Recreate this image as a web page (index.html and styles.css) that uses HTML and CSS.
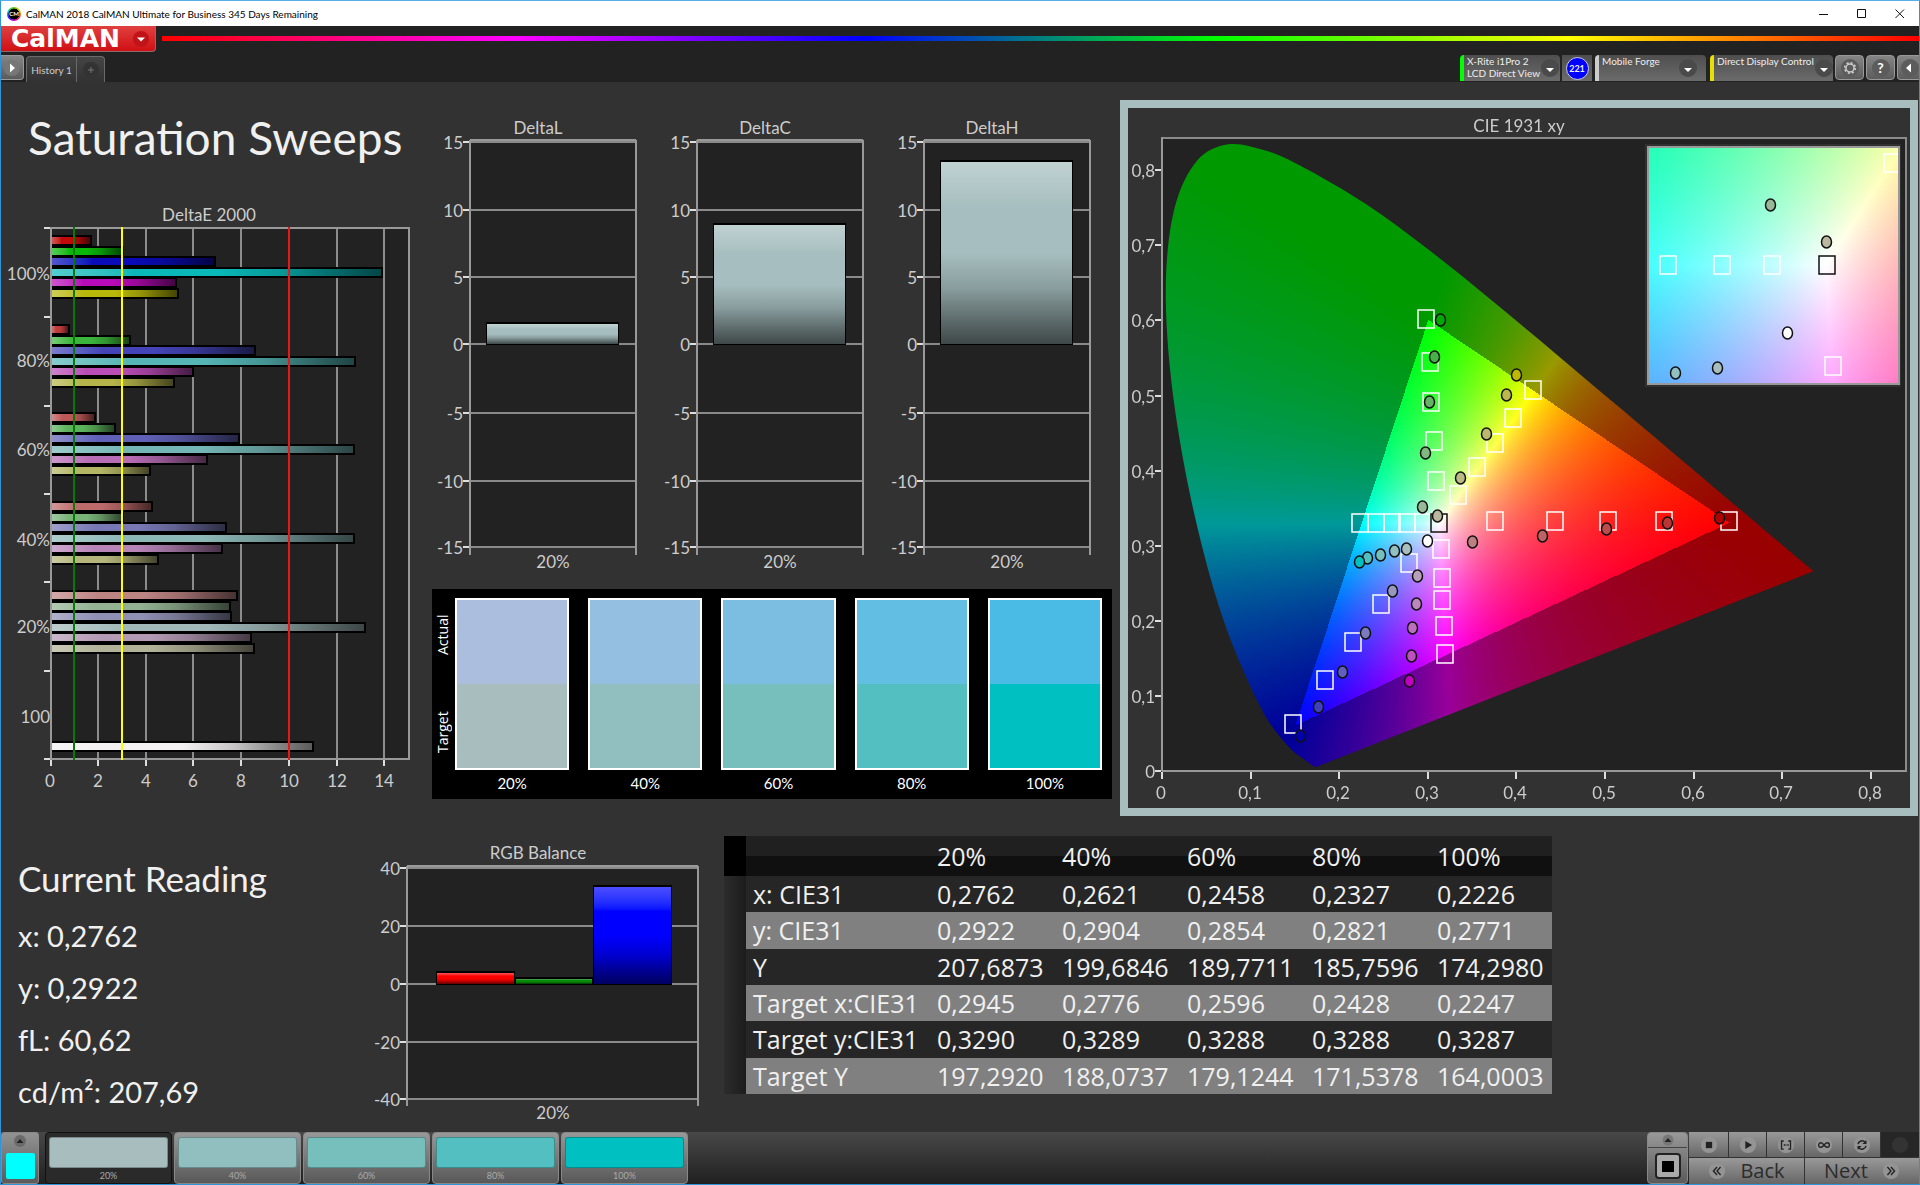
FILE: index.html
```html
<!DOCTYPE html>
<html lang="en">
<head>
<meta charset="utf-8">
<meta name="viewport" content="width=device-width, initial-scale=1">
<title>CalMAN 2018 CalMAN Ultimate for Business 345 Days Remaining</title>
<link rel="stylesheet" href="styles.css">
</head>
<body>
<div class="window">
  <header class="titlebar">
    <span class="app-icon">CM</span>
    <span class="app-title">CalMAN 2018 CalMAN Ultimate for Business 345 Days Remaining</span>
    <div class="window-buttons">
      <button type="button" aria-label="Minimize"><svg width="10" height="10" viewBox="0 0 10 10"><path d="M0 5.5h9" stroke="#111" fill="none"/></svg></button>
      <button type="button" aria-label="Maximize"><svg width="10" height="10" viewBox="0 0 10 10"><path d="M.5 .5h8v8h-8z" stroke="#111" fill="none"/></svg></button>
      <button type="button" aria-label="Close"><svg width="10" height="10" viewBox="0 0 10 10"><path d="M.5 .5l8.500 8.500M9 .5L.5 9" stroke="#111" fill="none"/></svg></button>
    </div>
  </header>

  <div class="brandbar">
    <button type="button" class="brand"><span>CalMAN</span>
      <svg width="18" height="18" viewBox="0 0 18 18"><circle cx="9" cy="9" r="8" fill="#c01418"/><path d="M5 7.500h8l-4 4z" fill="#fff"/></svg>
    </button>
    <div class="spectrum"></div>
  </div>

  <nav class="tabbar">
    <button type="button" class="tool-button tool-play" aria-label="Expand"><svg width="20" height="20" viewBox="0 0 20 20"><circle cx="10" cy="10" r="8" fill="#777"/><path d="M8 5.500l5 4.500-5 4.500z" fill="#fff"/></svg></button>
    <div class="tabs">
      <button type="button" class="tab">History 1</button>
      <button type="button" class="tab tab-add" aria-label="Add tab"><svg width="18" height="18" viewBox="0 0 18 18"><circle cx="9" cy="9" r="8" fill="#333"/><path d="M9 6v6M6 9h6" stroke="#777"/></svg></button>
    </div>
    <div class="devices">
      <button type="button" class="device device-meter"><span class="device-name">X-Rite i1Pro 2<br>LCD Direct View</span>
        <svg width="20" height="20" viewBox="0 0 20 20"><circle cx="10" cy="10" r="9" fill="#4a4a4a"/><path d="M6 10h8l-4 4z" fill="#fff"/></svg></button>
      <span class="device-count"><b>221</b></span>
      <button type="button" class="device device-source"><span class="device-name">Mobile Forge</span>
        <svg width="20" height="20" viewBox="0 0 20 20"><circle cx="10" cy="10" r="9" fill="#4a4a4a"/><path d="M6 10h8l-4 4z" fill="#fff"/></svg></button>
      <button type="button" class="device device-display"><span class="device-name">Direct Display Control</span>
        <svg width="20" height="20" viewBox="0 0 20 20"><circle cx="10" cy="10" r="9" fill="#4a4a4a"/><path d="M6 10h8l-4 4z" fill="#fff"/></svg></button>
      <button type="button" class="tool-button" aria-label="Settings"><svg width="20" height="20" viewBox="0 0 20 20"><circle cx="10" cy="10" r="9" fill="#5c5c5c"/><circle cx="10" cy="10" r="4" fill="none" stroke="#ccc" stroke-width="1.500"/><circle cx="10" cy="10" r="5.300" fill="none" stroke="#ccc" stroke-width="1.600" stroke-dasharray="2.080 2.080"/></svg></button>
      <button type="button" class="tool-button tool-help" aria-label="Help"><span>?</span></button>
      <button type="button" class="tool-button tool-collapse" aria-label="Collapse"><svg width="20" height="20" viewBox="0 0 20 20"><circle cx="11" cy="10" r="9" fill="#5c5c5c"/><path d="M12 5.500l-5 4.500 5 4.500z" fill="#fff"/></svg></button>
    </div>
  </nav>

  <main class="workspace">
    <section class="overview">
      <div class="sweeps">
        <h1>Saturation Sweeps</h1>
        <svg id="delta-e" class="chart" viewBox="1 200 429 610"></svg>
      </div>
      <div class="deltas">
        <div class="delta-charts">
          <svg id="delta-l" class="chart" viewBox="430 110 227 470"></svg>
          <svg id="delta-c" class="chart" viewBox="430 110 227 470"></svg>
          <svg id="delta-h" class="chart" viewBox="430 110 227 470"></svg>
        </div>
        <div class="compare">
          <div class="compare-labels"><span>Target</span><span>Actual</span></div>
          <div class="pairs">
            <figure><div class="pair pair-20"></div><figcaption>20%</figcaption></figure>
            <figure><div class="pair pair-40"></div><figcaption>40%</figcaption></figure>
            <figure><div class="pair pair-60"></div><figcaption>60%</figcaption></figure>
            <figure><div class="pair pair-80"></div><figcaption>80%</figcaption></figure>
            <figure><div class="pair pair-100"></div><figcaption>100%</figcaption></figure>
          </div>
        </div>
      </div>
      <div class="cie">
        <canvas id="cie-fill" class="chart" width="782" height="700"></canvas>
        <svg id="cie" class="chart" viewBox="1128 108 782 700"></svg>
      </div>
    </section>

    <section class="details">
      <div class="reading">
        <h2>Current Reading</h2>
        <p>x: 0,2762</p>
        <p>y: 0,2922</p>
        <p>fL: 60,62</p>
        <p>cd/m²: 207,69</p>
      </div>
      <div class="balance"><svg id="rgb" class="chart" viewBox="370 836 340 286"></svg></div>
      <div class="readings">
        <table class="data">
          <thead><tr><td></td><th></th><th>20%</th><th>40%</th><th>60%</th><th>80%</th><th>100%</th></tr></thead>
          <tbody>
            <tr><td></td><th>x: CIE31</th><td>0,2762</td><td>0,2621</td><td>0,2458</td><td>0,2327</td><td>0,2226</td></tr>
            <tr><td></td><th>y: CIE31</th><td>0,2922</td><td>0,2904</td><td>0,2854</td><td>0,2821</td><td>0,2771</td></tr>
            <tr><td></td><th>Y</th><td>207,6873</td><td>199,6846</td><td>189,7711</td><td>185,7596</td><td>174,2980</td></tr>
            <tr><td></td><th>Target x:CIE31</th><td>0,2945</td><td>0,2776</td><td>0,2596</td><td>0,2428</td><td>0,2247</td></tr>
            <tr><td></td><th>Target y:CIE31</th><td>0,3290</td><td>0,3289</td><td>0,3288</td><td>0,3288</td><td>0,3287</td></tr>
            <tr><td></td><th>Target Y</th><td>197,2920</td><td>188,0737</td><td>179,1244</td><td>171,5378</td><td>164,0003</td></tr>
          </tbody>
        </table>
      </div>
    </section>
  </main>

  <footer class="toolbar">
    <button type="button" class="current-color" aria-label="Current color">
      <svg width="14" height="14" viewBox="0 0 14 14"><circle cx="7" cy="7" r="6" fill="#6a6a6a"/><path d="M3.500 9L7 5l3.500 4z" fill="#222"/></svg>
      <span></span>
    </button>
    <div class="levels">
      <button type="button" class="level level-20 selected"><span></span>20%</button>
      <button type="button" class="level level-40"><span></span>40%</button>
      <button type="button" class="level level-60"><span></span>60%</button>
      <button type="button" class="level level-80"><span></span>80%</button>
      <button type="button" class="level level-100"><span></span>100%</button>
    </div>
    <div class="transport">
      <div class="pattern">
        <button type="button" aria-label="Show patterns"><svg width="14" height="12" viewBox="0 0 14 12"><circle cx="7" cy="6" r="5.500" fill="#777"/><path d="M3.500 8L7 4l3.500 4z" fill="#222"/></svg></button>
        <button type="button" class="pattern-window" aria-label="Pattern window"><svg width="26" height="26" viewBox="0 0 26 26"><rect x="1" y="1" width="24" height="24" rx="3" fill="#aaa" stroke="#222" stroke-width="2"/><rect x="7" y="8" width="12" height="11" fill="#000"/></svg></button>
      </div>
      <div class="keys">
        <button type="button" aria-label="Stop"><svg viewBox="0 0 20 20"><circle cx="10" cy="10" r="9"/><path d="M6.500 6.500h7v7h-7z" fill="#222"/></svg></button>
        <button type="button" aria-label="Play"><svg viewBox="0 0 20 20"><circle cx="10" cy="10" r="9"/><path d="M7 5.500l7.500 4.500L7 14.500z" fill="#222"/></svg></button>
        <button type="button" aria-label="Read series"><svg viewBox="0 0 20 20"><circle cx="10" cy="10" r="9"/><path d="M7.500 5.500h-2.500v9h2.500M12.500 5.500h2.500v9h-2.500M7.500 10h1.500M9.500 10h1M11.500 10h1.500" fill="none" stroke="#222" stroke-width="1.500"/></svg></button>
        <button type="button" aria-label="Read continuously"><svg viewBox="0 0 20 20"><circle cx="10" cy="10" r="9"/><path d="M10 10C8.500 8 7.500 7.500 6.500 7.500a2.500 2.500 0 0 0 0 5C7.500 12.500 8.500 12 10 10s2.500-2.500 3.500-2.500a2.500 2.500 0 0 1 0 5C12.500 12.500 11.500 12 10 10z" fill="none" stroke="#222" stroke-width="1.400"/></svg></button>
        <button type="button" aria-label="Refresh"><svg viewBox="0 0 20 20"><circle cx="10" cy="10" r="9"/><path d="M5.500 9a4.600 4.600 0 0 1 8-2M14.500 11a4.600 4.600 0 0 1-8 2" fill="none" stroke="#222" stroke-width="1.600"/><path d="M15 4.500v4.500h-4.500zM5 15.500V11h4.500z" fill="#222"/></svg></button>
        <button type="button" class="key-off" aria-label="Unused"><svg viewBox="0 0 20 20"><circle cx="10" cy="10" r="9"/></svg></button>
        <button type="button" class="step"><svg viewBox="0 0 20 20"><circle cx="10" cy="10" r="9"/><path d="M10 5.500L6 10l4 4.500M14 5.500L10 10l4 4.500" fill="none" stroke="#222" stroke-width="1.500"/></svg><span>Back</span></button>
        <button type="button" class="step"><span>Next</span><svg viewBox="0 0 20 20"><circle cx="10" cy="10" r="9"/><path d="M6 5.500l4 4.500-4 4.500M10 5.500l4 4.500-4 4.500" fill="none" stroke="#222" stroke-width="1.500"/></svg></button>
      </div>
    </div>
  </footer>
</div>
<script src="script.js"></script>
</body>
</html>
```
FILE: styles.css
```css
* { box-sizing: border-box; }
html, body { margin: 0; }
body {
  background: #323232;
  color: #f0f0f0;
  font-family: Lato, "Open Sans", sans-serif;
}
button {
  margin: 0;
  padding: 0;
  border: 0;
  background: none;
  color: inherit;
  font: inherit;
}
svg { display: block; flex: none; }

.window {
  display: flex;
  flex-direction: column;
  min-height: 100vh;
  border: 1px solid #2d95d8;
  border-top-color: #58aee8;
}

/* Title bar */
.titlebar {
  display: flex;
  align-items: center;
  height: 25px;
  padding-left: 6px;
  background: #fff;
  color: #000;
}
.app-icon {
  display: grid;
  place-items: center;
  width: 14px;
  height: 14px;
  border-radius: 50%;
  background: radial-gradient(#000 52%, transparent 58%), conic-gradient(#6c0, #cc0, #e33, #c0c, #22f, #0cc, #6c0);
  color: #fff;
  font-size: 6px;
  font-weight: 700;
}
.app-title { margin-left: 5px; font-size: 10px; line-height: 14px; }
.window-buttons { display: flex; margin-left: auto; }
.window-buttons button { display: grid; place-items: center; width: 38px; height: 24px; }

/* Brand strip */
.brandbar { display: flex; height: 28px; background: #222; align-items: flex-start; }
.brand {
  display: flex;
  align-items: center;
  justify-content: space-between;
  width: 155px;
  height: 26px;
  padding: 0 5px 0 10px;
  border: solid #8b6a6a;
  border-width: 0 1px 1px 0;
  border-radius: 0 0 4px 0;
  background: linear-gradient(#e04040, #d01014);
  color: #fff;
  font-family: "DejaVu Sans", sans-serif;
  font-size: 25px;
  font-weight: 700;
  line-height: 24px;
}
.spectrum {
  flex: 1;
  height: 5px;
  margin: 10px 0 0 6px;
  background: linear-gradient(90deg, #f00, #f0f 20%, #00f 40%, #0f0 60%, #ff0 80%, #f00);
}

/* Tabs and devices */
.tabbar { display: flex; height: 28px; background: #222; align-items: flex-end; }
.tool-button {
  display: grid;
  place-items: center;
  width: 29px;
  height: 25px;
  border: 1px solid #999;
  border-radius: 4px;
  background: linear-gradient(#858585, #5c5c5c);
}
.devices .tool-button { margin-bottom: 2px; align-self: flex-end; }
.tool-play { width: 23px; margin-top: 1px; border-left: 0; border-radius: 0 4px 4px 0; align-self: flex-start; }
.tabs { display: flex; margin-left: 2px; border: 1px solid #6a6a6a; border-bottom: 0; border-radius: 4px 4px 0 0; background: linear-gradient(#454545, #323232); }
.tab { width: 49px; height: 25px; color: #ccc; font-size: 10px; white-space: nowrap; }
.tab-add { display: grid; place-items: center; width: 28px; border-left: 1px solid #6a6a6a; }
.devices { display: flex; gap: 2px; margin-left: auto; color: #eee; }
.device {
  display: flex;
  justify-content: space-between;
  align-items: center;
  height: 26px;
  padding: 0 8px 0 3px;
  border-left: 4px solid #0f0;
  border-radius: 4px 4px 0 0;
  background: linear-gradient(#4e4e4e, #6b6b6b);
  font-size: 10px;
  line-height: 12px;
  text-align: left;
}
.device-name { align-self: flex-start; white-space: nowrap; }
.device-meter { width: 100px; }
.device-count { display: grid; place-items: center; width: 30px; height: 26px; background: linear-gradient(#4e4e4e, #6b6b6b); }
.device-count b { width: 23px; height: 23px; border: 1px solid #ccd; border-radius: 50%; background: #00f; font-size: 9px; line-height: 21px; text-align: center; }
.device-source { width: 111px; margin-left: 1px; border-left-color: #ccc; }
.device-display { width: 123px; margin-left: 2px; padding-right: 4px; border-left-color: #e8e000; }
.tool-help span { width: 18px; height: 18px; border-radius: 50%; background: #5c5c5c; color: #fff; font-size: 14px; font-weight: 700; line-height: 18px; }
.tool-collapse.tool-button { width: 22px; border-right: 0; border-radius: 4px 0 0 4px; }

/* Workspace */
.workspace { flex: 1; }
.chart { display: block; width: 100%; height: auto; }
.chart text { font-size: 17px; fill: #ccc; }
.overview {
  display: grid;
  grid-template-columns: 429fr 690fr 799fr;
  align-items: start;
}
.overview > * { min-width: 0; }
h1 {
  height: 118px;
  margin: 0;
  padding: 24px 0 0 27px;
  font-size: 46px;
  font-weight: 400;
  line-height: 64px;
  white-space: nowrap;
}
.deltas { padding-top: 28px; }
.delta-charts { display: grid; grid-template-columns: repeat(3, minmax(0, 1fr)); padding-right: 9px; }
.compare {
  display: flex;
  gap: 4px;
  margin: 9px 8px 0 2px;
  padding: 9px 10px 2px 3px;
  background: #000;
  color: #fff;
}
.compare-labels {
  display: flex;
  justify-content: space-between;
  align-items: center;
  width: 16px;
  height: 172px;
  padding: 17px 0;
  writing-mode: vertical-rl;
  transform: rotate(180deg);
  font-family: "Open Sans", sans-serif;
  font-size: 14px;
  line-height: 16px;
}
.pairs { display: grid; flex: 1; grid-template-columns: repeat(5, minmax(0, 1fr)); column-gap: 19px; }
figure { margin: 0; }
.pair { height: 172px; border: 2px solid #fff; }
.pair-20 { background: linear-gradient(#abbedd 50%, #a7bdbe 50%); }
.pair-40 { background: linear-gradient(#94bfe1 50%, #91bebe 50%); }
.pair-60 { background: linear-gradient(#7cbde2 50%, #76bfbd 50%); }
.pair-80 { background: linear-gradient(#63bee3 50%, #54bfc0 50%); }
.pair-100 { background: linear-gradient(#49bbe4 50%, #00c0c2 50%); }
figcaption { font-size: 15px; line-height: 27px; text-align: center; }
.cie {
  display: grid;
  margin: 18px 1px 3px 0;
  border: 8px solid #a8bebe;
}
.cie > * { grid-area: 1 / 1; }

/* Details */
.details {
  display: grid;
  grid-template-columns: 369fr 340fr 842fr 367fr;
  align-items: start;
  padding-top: 17px;
}
.details > * { min-width: 0; }
.reading { padding: 16px 0 0 17px; }
.reading h2 { margin: 0 0 6px; font-size: 35px; font-weight: 400; line-height: 52px; white-space: nowrap; }
.reading p { margin: 0; font-size: 29px; line-height: 52px; white-space: nowrap; }
.readings { padding-left: 14px; }
.data {
  width: 100%;
  height: 258px;
  border-collapse: collapse;
  table-layout: fixed;
  font-family: "Open Sans", sans-serif;
  font-size: 25px;
  line-height: 36px;
  white-space: nowrap;
}
.data th, .data td { padding: 0; font-weight: 400; text-align: left; }
.data thead th { height: 40px; background: linear-gradient(#202020 50%, #101010 50%); }
.data tbody tr { background: #262626; }
.data tbody tr:nth-child(even) { background: #808080; }
.data tr > * { width: 125px; }
.data tr > :last-child { width: auto; }
.data tr > :first-child { width: 22px; background: linear-gradient(90deg, #2c2c2c, #1c1c1c); }
.data thead tr > :first-child { background: #000; }
.data tr > :nth-child(2) { width: 191px; padding-left: 7px; }

/* Bottom toolbar */
.toolbar {
  display: flex;
  gap: 6px;
  height: 52px;
  background: linear-gradient(#484848, #202020);
}
.current-color {
  display: flex;
  flex-direction: column;
  align-items: center;
  justify-content: space-between;
  width: 38px;
  padding: 1px 0 4px;
  border: 1px solid #888;
  border-radius: 3px;
  background: linear-gradient(#929292, #5a5a5a);
}
.current-color span { width: 29px; height: 26px; border-radius: 2px; background: #0ff; }
.levels { display: flex; gap: 2px; }
.level {
  width: 127px;
  padding: 3px 3px 0;
  border: 1px solid #888;
  border-radius: 4px;
  background: linear-gradient(#989898, #585858);
  color: #aaa;
  font-size: 9px;
  line-height: 15px;
}
.level span { display: block; height: 31px; border: 1px solid #00000044; border-radius: 3px; }
.level.selected { border-color: #111; background: #2a2a2a; }
.level-20 span { background: #a7bdbe; }
.level-40 span { background: #91bebe; }
.level-60 span { background: #76bfbd; }
.level-80 span { background: #54bfc0; }
.level-100 span { background: #00c0c2; }
.transport { display: flex; gap: 1px; margin-left: auto; }
.pattern { display: flex; flex-direction: column; width: 41px; border: 1px solid #888; border-radius: 4px; background: linear-gradient(#999, #5a5a5a); }
.pattern button { display: grid; place-items: center; height: 15px; border-bottom: 1px solid #444; }
.pattern .pattern-window { height: 35px; border-bottom: 0; }
.keys { display: grid; grid-template-columns: 39px repeat(4, 37px) 38px; grid-template-rows: 25px 26px; gap: 1px; background: #333; }
.keys button { display: flex; align-items: center; justify-content: center; gap: 14px; background: linear-gradient(#999, #666); }
.keys svg { width: 18px; height: 18px; fill: #949494; }
.keys .key-off { background: #262626; }
.keys .key-off svg { fill: #333; }
.keys .step { grid-column: span 3; color: #2c2c2c; font-family: "Open Sans", sans-serif; font-size: 20px; line-height: 24px; font-weight: 500; }
```
FILE: script.js
```js
const NS = 'http://www.w3.org/2000/svg';

function add(parent, name, attrs, text) {
  const el = document.createElementNS(NS, name);
  for (const key in attrs) el.setAttribute(key, attrs[key]);
  if (text !== undefined) el.textContent = text;
  parent.appendChild(el);
  return el;
}
function label(svg, x, y, text, anchor) {
  add(svg, 'text', { x, y: y + 7, 'text-anchor': anchor || 'middle' }, text);
}
function line(svg, x1, y1, x2, y2, stroke, width) {
  add(svg, 'line', { x1, y1, x2, y2, stroke: stroke || '#999', 'stroke-width': width || 2 });
}

/* A gradient from a light tint through the base colour to a dark shade. */
let gradients = 0;
function gloss(svg, color, horizontal) {
  const id = 'gloss' + (++gradients);
  const g = add(svg, 'linearGradient', horizontal ? { id } : { id, x2: 0, y2: 1 });
  const mix = (target, share) => `color-mix(in srgb, ${color}, ${target} ${share}%)`;
  [[0, mix('white', 30)], [0.25, color], [0.5, color], [0.7, mix('black', 18)], [1, mix('black', 62)]]
    .forEach(([offset, c]) => add(g, 'stop', { offset, style: 'stop-color:' + c }));
  return `url(#${id})`;
}

/* DeltaE: horizontal bars grouped by saturation level */
(function () {
  const svg = document.getElementById('delta-e');
  add(svg, 'rect', { x: 51, y: 227, width: 359, height: 532, fill: '#222' });
  label(svg, 209, 214, 'DeltaE 2000');
  const ticks = [51, 98, 146, 193, 241, 289, 337, 384];
  ticks.forEach((x, i) => {
    if (i) line(svg, x, 227, x, 759, '#8c8c8c');
    line(svg, x, 760, x, 766, '#ddd');
    label(svg, x - (i ? 0 : 1), 780, String(i * 2));
  });
  [228, 317, 406, 494, 582, 671, 759].forEach(y => line(svg, 44, y, 51, y, '#ddd'));
  const groups = [
    ['100%', 273, 240, ['#c00a0a', '#0ab80a', '#0a0ab8', '#0ab8b8', '#b80ab8', '#b8b80a'], [92, 124, 216, 383, 177, 179]],
    ['80%', 360, 329, ['#bd3c3c', '#3cb53c', '#4444b8', '#55b5b5', '#b94cb5', '#b5b54c'], [70, 131, 256, 356, 194, 175]],
    ['60%', 449, 417, ['#bd5858', '#5cb35c', '#6060b8', '#74b5b5', '#b86cb5', '#b5b566'], [96, 116, 240, 355, 208, 151]],
    ['40%', 539, 506, ['#bd6a6a', '#78b378', '#7878b5', '#8cb8b8', '#b884b8', '#b5b57c'], [153, 124, 227, 355, 223, 159]],
    ['20%', 626, 595, ['#bd8484', '#92b292', '#9090b5', '#a0b8b8', '#b59ab5', '#b2b298'], [238, 231, 232, 366, 252, 255]]
  ];
  groups.forEach(([name, ly, y, colors, ends]) => {
    label(svg, 50, ly, name, 'end');
    ends.forEach((end, i) => {
      const top = Math.round(y + i * 10.5) - 5;
      add(svg, 'rect', { x: 51, y: top, width: end - 51, height: 11, fill: '#000' });
      add(svg, 'rect', { x: 52, y: top + 2, width: end - 54, height: 7, fill: gloss(svg, colors[i], true) });
    });
  });
  label(svg, 50, 716, '100', 'end');
  add(svg, 'rect', { x: 51, y: 741, width: 263, height: 11, fill: '#000' });
  add(svg, 'rect', { x: 52, y: 743, width: 260, height: 7, fill: gloss(svg, '#f2f0f0', true) });
  add(svg, 'rect', { x: 51, y: 228, width: 358, height: 531, fill: 'none', stroke: '#999', 'stroke-width': 2 });
  line(svg, 74, 227, 74, 760, '#087808');
  line(svg, 122, 227, 122, 760, '#ff0');
  line(svg, 289, 227, 289, 760, '#e81818');
})();

/* Vertical bar charts around a zero line */
function columns(id, o) {
  const svg = document.getElementById(id);
  add(svg, 'rect', { x: o.left, y: o.top, width: o.right - o.left, height: o.bottom - o.top, fill: '#222' });
  label(svg, 538, o.titleY, o.title);
  o.ticks.forEach(([y, text]) => {
    line(svg, o.left, y, o.right, y, '#8a8a8a');
    line(svg, o.left - 7, y, o.left, y, '#ddd');
    label(svg, o.left - 7, y, text, 'end');
  });
  line(svg, o.left, o.top, o.right, o.top, '#999');
  line(svg, o.left, o.top, o.left, o.bottom + 7, '#999');
  line(svg, o.right, o.top, o.right, o.bottom + 7, '#999');
  label(svg, 553, o.bottom + 13, '20%');
  o.bars.forEach(([x, width, y, color]) => {
    add(svg, 'rect', { x, y, width, height: o.zero - y + 1, fill: '#000' });
    add(svg, 'rect', { x: x + 1, y: y + 2, width: width - 2, height: o.zero - y - 2, fill: gloss(svg, color) });
  });
}
const deltaTicks = [[142, '15'], [210, '10'], [277, '5'], [344, '0'], [413, '-5'], [481, '-10'], [547, '-15']];
[['delta-l', 'DeltaL', 322], ['delta-c', 'DeltaC', 223], ['delta-h', 'DeltaH', 160]].forEach(([id, title, y]) =>
  columns(id, { title, titleY: 127, left: 470, right: 636, top: 140, bottom: 548, zero: 344, ticks: deltaTicks, bars: [[486, 133, y, '#a6bebf']] }));
columns('rgb', {
  title: 'RGB Balance', titleY: 852, left: 407, right: 698, top: 866, bottom: 1099, zero: 984,
  ticks: [[868, '40'], [926, '20'], [984, '0'], [1042, '-20'], [1099, '-40']],
  bars: [[436, 79, 971, '#ff0000'], [515, 78, 977, '#0a8a0a'], [593, 79, 885, '#0000ff']]
});

/* CIE 1931 chromaticity diagram */
(function () {
  const OX = 34.5, OY = 662.5, SX = 886, SY = 751;
  const locus = [[.1741, .005], [.1733, .0048], [.1714, .0051], [.1689, .0069], [.1644, .0109], [.1566, .0177], [.144, .0297],
    [.1241, .0578], [.1096, .0868], [.0913, .1327], [.0687, .2007], [.0454, .295], [.0235, .4127], [.0082, .5384],
    [.0039, .6548], [.0139, .7502], [.0389, .812], [.0743, .8338], [.1142, .8262], [.1547, .8059], [.2296, .7543],
    [.3016, .6923], [.3731, .6245], [.4441, .5547], [.5125, .4866], [.5752, .4242], [.627, .3725], [.6658, .334],
    [.6915, .3083], [.719, .2809], [.7347, .2653]];
  const canvas = document.getElementById('cie-fill');
  const ctx = canvas.getContext('2d');

  function rgb(x, y) {
    const X = x / y, Z = (1 - x - y) / y;
    const c = [3.2406 * X - 1.5372 - .4986 * Z, -.9689 * X + 1.8758 + .0415 * Z, .0557 * X - .204 + 1.057 * Z];
    const inside = Math.min(...c) >= 0;
    const peak = Math.max(...c);
    return c.map(v => Math.max(0, v) / peak * 255 * (inside ? 1 : .6));
  }
  function paint(left, top, width, height, toXY) {
    const layer = document.createElement('canvas');
    layer.width = width;
    layer.height = height;
    const lctx = layer.getContext('2d');
    const data = lctx.createImageData(width, height);
    for (let j = 0; j < height; j++) for (let i = 0; i < width; i++) {
      const [x, y] = toXY(left + i + .5, top + j + .5);
      const c = rgb(x, Math.max(y, .0005));
      data.data.set([c[0], c[1], c[2], 255], (j * width + i) * 4);
    }
    lctx.putImageData(data, 0, 0);
    return layer;
  }

  ctx.fillStyle = '#222';
  ctx.fillRect(34, 30, 744, 633);
  ctx.save();
  const p = locus.map(([x, y]) => [OX + x * SX, OY - y * SY]);
  ctx.beginPath();
  ctx.moveTo(p[0][0], p[0][1]);
  for (let i = 0; i < p.length - 1; i++) {
    const a = p[Math.max(i - 1, 0)], b = p[i], c = p[i + 1], d = p[Math.min(i + 2, p.length - 1)];
    ctx.bezierCurveTo(b[0] + (c[0] - a[0]) / 6, b[1] + (c[1] - a[1]) / 6, c[0] - (d[0] - b[0]) / 6, c[1] - (d[1] - b[1]) / 6, c[0], c[1]);
  }
  ctx.closePath();
  ctx.clip();
  ctx.drawImage(paint(34, 30, 744, 633, (x, y) => [(x - OX) / SX, (OY - y) / SY]), 34, 30);
  ctx.restore();

  ctx.fillStyle = '#303030';
  ctx.fillRect(517, 36, 256, 243);
  ctx.fillStyle = '#999';
  ctx.fillRect(519, 38, 253, 239);
  ctx.drawImage(paint(521, 40, 249, 235, (x, y) => [.3127 + (x - 698.5) / 3000, .329 - (y - 156.5) / 2815]), 521, 40);

  const svg = document.getElementById('cie');
  label(svg, 1519, 125, 'CIE 1931 xy');
  line(svg, 1162, 138, 1907, 138, '#8a8a8a');
  line(svg, 1162, 771, 1907, 771);
  line(svg, 1162, 137, 1162, 771, '#999');
  line(svg, 1906, 138, 1906, 771, '#8a8a8a');
  for (let i = 0; i <= 8; i++) {
    const text = i ? '0,' + i : '0';
    const x = Math.round(1162 + i * 88.6), y = Math.round(771 - i * 75.1);
    line(svg, x, 772, x, 779, '#ddd');
    line(svg, 1155, y, 1161, y, '#ddd');
    label(svg, x - 1, 792, text);
    label(svg, 1155, y, text, 'end');
  }

  add(add(svg, 'clipPath', { id: 'inset' }), 'rect', { x: 1649, y: 148, width: 249, height: 235 });
  const square = (x, y, stroke) => add(svg, 'rect', {
    x: x - 8, y: y - 9, width: 16, height: 18, fill: 'none', stroke: stroke || '#fff', 'stroke-width': 1.5, 'clip-path': x > 1880 ? 'url(#inset)' : 'none'
  });
  const dot = (x, y, fill) => add(svg, 'ellipse', { cx: x + .5, cy: y, rx: 5, ry: 6, fill, stroke: '#111', 'stroke-width': 1.5 });

  [[1426, 319], [1430, 362], [1431, 402], [1434, 441], [1436, 481],
    [1533, 390], [1513, 418], [1495, 443], [1477, 467], [1458, 495],
    [1360, 523], [1376, 523], [1392, 523], [1407, 523], [1423, 523],
    [1495, 521], [1555, 521], [1608, 521], [1664, 521], [1729, 521],
    [1441, 549], [1442, 578], [1442, 600], [1444, 626], [1445, 654],
    [1409, 563], [1381, 604], [1353, 642], [1325, 680], [1293, 724],
    [1668, 265], [1722, 265], [1772, 265], [1833, 366], [1892, 163]].forEach(([x, y]) => square(x, y));
  square(1439, 523, '#111');
  square(1827, 265, '#111');

  [[1440, 320, '#00a800'], [1434, 357, '#48b048'], [1429, 402, '#64b464'], [1425, 453, '#80b880'], [1422, 507, '#98b898'],
    [1516, 375, '#c0b800'], [1506, 395, '#bdb84c'], [1486, 434, '#bcb870'], [1460, 478, '#bcb888'], [1437, 516, '#bcb8a0'],
    [1427, 541, '#fff'],
    [1406, 549, '#a8bebe'], [1394, 551, '#92bfbf'], [1380, 555, '#76bfbd'], [1367, 558, '#54bfc0'], [1359, 562, '#00c0c0'],
    [1417, 576, '#b8a0b8'], [1416, 604, '#bc88bc'], [1412, 628, '#bc70bc'], [1411, 656, '#bc50bc'], [1409, 681, '#c000c0'],
    [1392, 591, '#9898bc'], [1365, 633, '#7c7cbc'], [1342, 672, '#6060bc'], [1318, 707, '#4040bc'], [1300, 736, '#0000b0'],
    [1472, 542, '#bc8080'], [1542, 536, '#bc6464'], [1606, 529, '#bc4c4c'], [1667, 523, '#bc3434'], [1719, 518, '#b00000'],
    [1770, 205, '#98b898'], [1826, 242, '#bcb8a0'], [1787, 333, '#fff'], [1717, 368, '#a8bebe'], [1675, 373, '#92bfbf']
  ].forEach(([x, y, fill]) => dot(x, y, fill));
})();
```
